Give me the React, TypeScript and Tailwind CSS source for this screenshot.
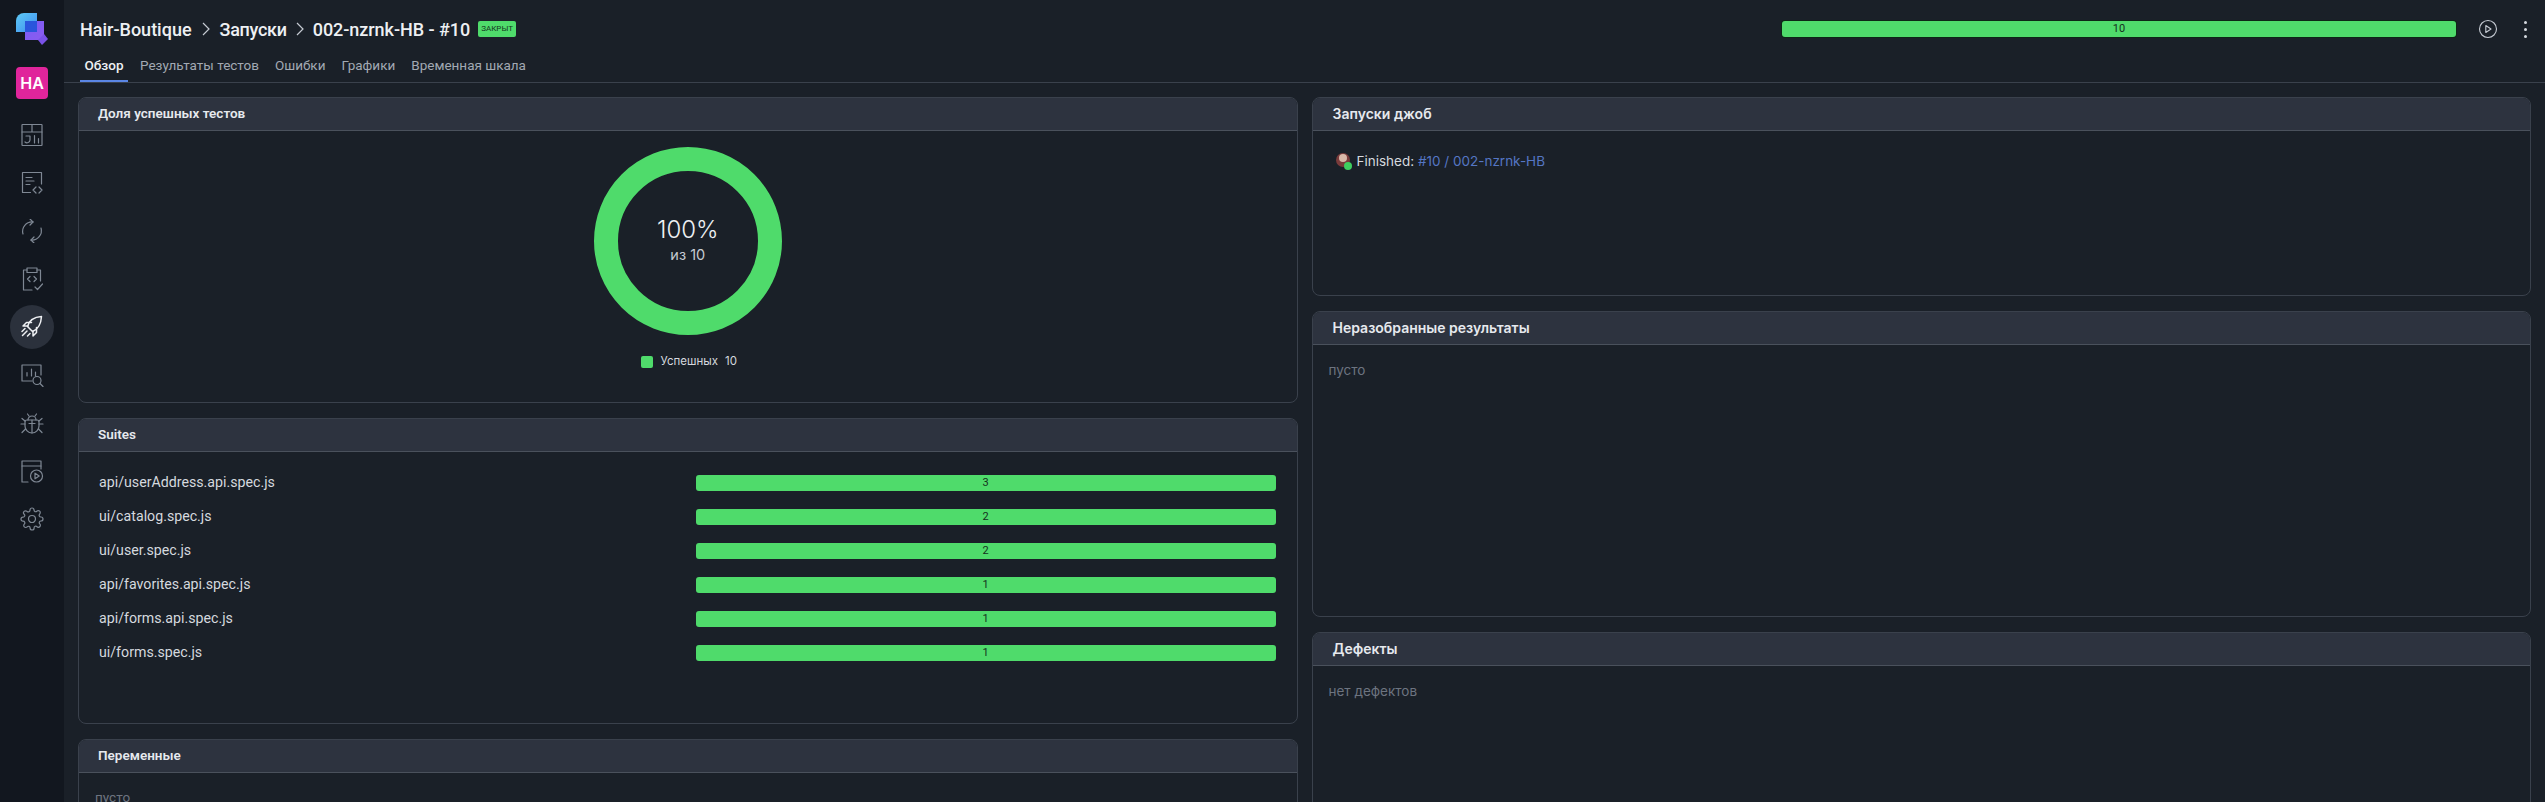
import React from "react";

const I = ({ children, w = 1.2 }: { children: React.ReactNode; w?: number }) => (
  <svg width="24" height="24" viewBox="0 0 24 24" fill="none" stroke="currentColor" strokeWidth={w} strokeLinecap="round" strokeLinejoin="round">
    {children}
  </svg>
);

const navIcons: React.ReactNode[] = [
  <I><rect x="2" y="1.500" width="20" height="21" rx="0.500" /><path d="M2 9h20M12 1.500V9" /><path d="M6 13h4v4a3 3 0 0 1-5 2" /><path d="M14.500 12.500V20M18.500 15.500V20" /></I>,
  <I><path d="M21.500 13V1.500h-19v20h8" /><path d="M6 6.500h6M6 10h8M6 13.500h4" /><path d="M16 16l-3 3 3 3M19 16l3 3-3 3" /></I>,
  <I><path d="M3 15A9.500 9.500 0 0 1 13 2.900" /><path d="M10 0l3 3-3 3" /><path d="M21 9A9.500 9.500 0 0 1 11 21.100" /><path d="M14 18l-3 3 3 3" /></I>,
  <I><path d="M7 3H3.500v20H12" /><path d="M17 3h3.500v11" /><rect x="7" y="1" width="10" height="4.500" /><path d="M10 9.500l-2.500 2.500 2.500 2.500M14 9.500l2.500 2.500-2.500 2.500" /><path d="M15 20l2.500 2.500 5-5.500" /></I>,
  <I w={1.500}><path d="M12.500 16.500 7.500 11.500C9 6 13.500 2 21.500 1.500 21 9.500 17.500 14.500 12.500 16.500Z" /><path d="M8 11H3L6.500 7.500h5" /><path d="M13 16v5l3.500-3.500v-5" /><path d="M7 16l-4.500 4.500M5 13.500l-3 3M10 18.500l-2.500 2.500" /></I>,
  <I><path d="M12 18H2V2h19v10" /><path d="M7 13V9.500M11.500 13V6M15.500 13V9" /><circle cx="17" cy="17.500" r="4" /><path d="m20 20.500 3 3" /></I>,
  <I><path d="M7 9h10a2 2 0 0 1 2 2v4a7 7 0 0 1-14 0v-4a2 2 0 0 1 2-2Z" /><path d="M8 9a4 4 0 0 1 8 0" /><path d="M12 9v13M9 12.500h6" /><path d="M9 5 7.500 3M15 5l1.500-2M5 13H1M19 13h4M5.500 18 2 21.500M18.500 18 22 21.500M5 10 2 7.500M19 10l3-2.500" /></I>,
  <I><path d="M21 10V2H2v21h6" /><path d="M2 7h19" /><circle cx="16.500" cy="17" r="6" /><path d="M15 14.200v5.600l4.200-2.800Z" /></I>,
  <I><path d="M12 15.500a3.500 3.500 0 1 0 0-7 3.500 3.500 0 0 0 0 7Z" /><path d="M19.400 15a1.650 1.650 0 0 0 .33 1.820l.06.06a2 2 0 1 1-2.830 2.830l-.06-.06a1.650 1.650 0 0 0-2.800 1.170V21a2 2 0 0 1-4 0v-.09a1.650 1.650 0 0 0-2.900-1.080l-.06.06a2 2 0 1 1-2.830-2.830l.06-.06a1.650 1.650 0 0 0-1.170-2.800H3a2 2 0 0 1 0-4h.09a1.650 1.650 0 0 0 1.080-2.900l-.06-.06a2 2 0 1 1 2.830-2.830l.06.06a1.650 1.650 0 0 0 1.820.33H9a1.650 1.650 0 0 0 1-1.510V3a2 2 0 0 1 4 0v.09a1.650 1.650 0 0 0 2.800 1.170l.06-.06a2 2 0 1 1 2.830 2.830l-.06.06a1.650 1.650 0 0 0-.33 1.820V9a1.650 1.650 0 0 0 1.510 1H21a2 2 0 0 1 0 4h-.09a1.650 1.650 0 0 0-1.510 1Z" /></I>,
];

const Logo = () => (
  <svg width="32" height="34" viewBox="0 0 32 34">
    <defs>
      <linearGradient id="lg1" x1="0" y1="0" x2="1" y2="1">
        <stop offset="0" stopColor="#5ecbf5" />
        <stop offset="1" stopColor="#3f8cf0" />
      </linearGradient>
      <linearGradient id="lg2" x1="0" y1="0" x2="1" y2="1">
        <stop offset="0" stopColor="#7a5cf5" />
        <stop offset="1" stopColor="#8b5cf0" />
      </linearGradient>
    </defs>
    <path d="M0 8a8 8 0 0 1 8-8h13v19H0Z" fill="url(#lg1)" />
    <rect x="9" y="8" width="19" height="19" fill="url(#lg2)" />
    <path d="M22 27l6-6 4 5-6 6Z" fill="#7a52e8" />
    <rect x="9" y="8" width="12" height="11" fill="#2a55dc" />
  </svg>
);

const Panel = ({ title, className, titleFont, children }: { title: string; className: string; titleFont?: string; children: React.ReactNode }) => (
  <section className={`border border-[#3a414c] rounded-[8px] overflow-hidden shrink-0 ${className}`}>
    <div className={`h-[33px] bg-[#2d333f] border-b border-[#4a515c] pb-[2px] flex items-center font-semibold text-[#e6e9ee] ${titleFont ?? "pl-[19px] text-[13.5px]"}`}>
      {title}
    </div>
    {children}
  </section>
);

const Bar = ({ value, className }: { value: number; className: string }) => (
  <div className={`h-[16px] rounded-[3px] bg-[#4fdb6b] flex items-center justify-center text-[11px] text-[#15301d] ${className}`}>
    {value}
  </div>
);

const suites: [string, number][] = [
  ["api/userAddress.api.spec.js", 3],
  ["ui/catalog.spec.js", 2],
  ["ui/user.spec.js", 2],
  ["api/favorites.api.spec.js", 1],
  ["api/forms.api.spec.js", 1],
  ["ui/forms.spec.js", 1],
];

const tabs = ["Результаты тестов", "Ошибки", "Графики", "Временная шкала"];
const rightTitle = "pl-[20px] font-['Inter',sans-serif] text-[14px]";

export default function App() {
  return (
    <div className="flex h-[802px] w-[2545px] overflow-hidden bg-[#1a2028] font-['Roboto',sans-serif] text-[#d5d9df]">
      <aside className="w-[64px] shrink-0 bg-[#12171f] flex flex-col items-center pt-[13px]">
        <Logo />
        <div className="mt-[20px] w-[32px] h-[32px] rounded-[4px] bg-[#e0259b] flex items-center justify-center text-[16px] font-semibold text-white font-['Inter',sans-serif]">
          HA
        </div>
        <nav className="mt-[14px] flex flex-col items-center text-[#7f8894]">
          {navIcons.map((icon, i) => (
            <div
              key={i}
              className={`w-[44px] h-[44px] mb-[4px] rounded-full flex items-center justify-center ${i === 4 ? "bg-[#2b313c] text-[#eef0f3]" : ""}`}
            >
              {icon}
            </div>
          ))}
        </nav>
      </aside>

      <main className="flex-1 min-w-0 flex flex-col">
        <header className="h-[83px] shrink-0 border-b border-[#3a414c] pl-[16px] pr-[12px] flex flex-col">
          <div className="h-[58px] flex items-center">
            <span className="text-[18px] font-medium text-[#eef0f3]">Hair-Boutique</span>
            <svg className="mx-[10px]" width="8" height="14" viewBox="0 0 8 14" fill="none" stroke="#c5cad2" strokeWidth="1.200"><path d="m1 1 6 6-6 6" /></svg>
            <span className="text-[18px] font-medium text-[#eef0f3] tracking-[-0.3px]">Запуски</span>
            <svg className="mx-[9px]" width="8" height="14" viewBox="0 0 8 14" fill="none" stroke="#c5cad2" strokeWidth="1.200"><path d="m1 1 6 6-6 6" /></svg>
            <span className="text-[18px] font-medium text-[#eef0f3] tracking-[-0.05px]">002-nzrnk-HB - #10</span>
            <span className="ml-[8px] h-[16px] w-[38px] rounded-[2px] bg-[#4fdb6b] text-[#15381f] text-[8px] flex items-center justify-center">ЗАКРЫТ</span>
            <Bar value={10} className="ml-auto w-[674px] shadow-[0_0_0_1px_#0d2616]" />
            <svg className="ml-[22px]" width="20" height="20" viewBox="0 0 20 20" fill="none" stroke="#c5cad2" strokeWidth="1.100"><circle cx="10" cy="10" r="8.500" /><path d="M7.800 6.500v7l5.200-3.500Z" strokeLinejoin="round" /></svg>
            <div className="ml-[26px] mr-[6px] flex flex-col gap-[4px]">
              <span className="w-[3px] h-[3px] rounded-full bg-[#d5d9df]" />
              <span className="w-[3px] h-[3px] rounded-full bg-[#d5d9df]" />
              <span className="w-[3px] h-[3px] rounded-full bg-[#d5d9df]" />
            </div>
          </div>
          <nav className="flex-1 -mt-[3px] flex text-[13.5px] text-[#a2a9b3] gap-[16px]">
            <div className="w-[48px] text-center text-[#eef0f3] font-medium border-b-2 border-[#5b86e5] -mr-[4px]">Обзор</div>
            {tabs.map((t) => (
              <div key={t}>{t}</div>
            ))}
          </nav>
        </header>

        <div className="flex-1 min-h-0 px-[14px] pt-[14px] grid grid-cols-2 gap-x-[14px] items-start">
          <div className="flex flex-col gap-[15px]">
            <Panel title="Доля успешных тестов" className="h-[306px]">
              <div className="flex flex-col items-center pt-[16px]">
                <div className="relative w-[188px] h-[188px] rounded-full border-[24px] border-[#4fdb6b] flex flex-col items-center justify-center">
                  <div className="text-[24px] leading-[30px] font-['Inter',sans-serif] font-light text-[#eef0f3] -mt-[2px]">100%</div>
                  <div className="text-[14.5px] leading-[20px] font-['Inter',sans-serif] text-[#c5cad2]">из 10</div>
                </div>
                <div className="mt-[18px] flex items-center text-[11.5px] font-['Inter',sans-serif] text-[#d5d9df] ml-[2px]">
                  <span className="w-[12px] h-[12px] rounded-[2px] bg-[#4fdb6b] mr-[8px]" />
                  Успешных
                  <span className="ml-[7px]">10</span>
                </div>
              </div>
            </Panel>
            <Panel title="Suites" className="h-[306px]">
              <div className="pt-[14px] pl-[20px] pr-[21px]">
                {suites.map(([name, v]) => (
                  <div key={name} className="h-[34px] flex items-center justify-between text-[14.2px] text-[#d5d9df]">
                    <span>{name}</span>
                    <Bar value={v} className="w-[580px]" />
                  </div>
                ))}
              </div>
            </Panel>
            <Panel title="Переменные" className="h-[200px]">
              <div className="pt-[14px] pl-[16px] text-[13.5px] text-[#6d7480]">пусто</div>
            </Panel>
          </div>

          <div className="flex flex-col gap-[15px]">
            <Panel title="Запуски джоб" className="h-[199px]" titleFont={rightTitle}>
              <div className="pt-[20px] pl-[23px] flex items-center text-[13.5px] font-['Inter',sans-serif] text-[#d5d9df]">
                <span className="relative w-[14px] h-[16px] mr-[7px]">
                  <span className="absolute left-0 top-0 w-[14px] h-[14px] rounded-full bg-[#7a3b3b]" />
                  <span className="absolute left-[3px] top-[1px] w-[8px] h-[8px] rounded-full bg-[#d8b8a8]" />
                  <span className="absolute left-[8px] top-[9px] w-[8px] h-[8px] rounded-full bg-[#3ecf5f]" />
                </span>
                <span>Finished:&nbsp;</span>
                <span className="text-[#5576c4]">#10 / 002-nzrnk-HB</span>
              </div>
            </Panel>
            <Panel title="Неразобранные результаты" className="h-[306px]" titleFont={rightTitle}>
              <div className="pt-[15px] pl-[16px] text-[13.5px] font-['Inter',sans-serif] text-[#6d7480]">пусто</div>
            </Panel>
            <Panel title="Дефекты" className="h-[200px]" titleFont={rightTitle}>
              <div className="pt-[15px] pl-[16px] text-[13.5px] font-['Inter',sans-serif] text-[#6d7480]">нет дефектов</div>
            </Panel>
          </div>
        </div>
      </main>
    </div>
  );
}
